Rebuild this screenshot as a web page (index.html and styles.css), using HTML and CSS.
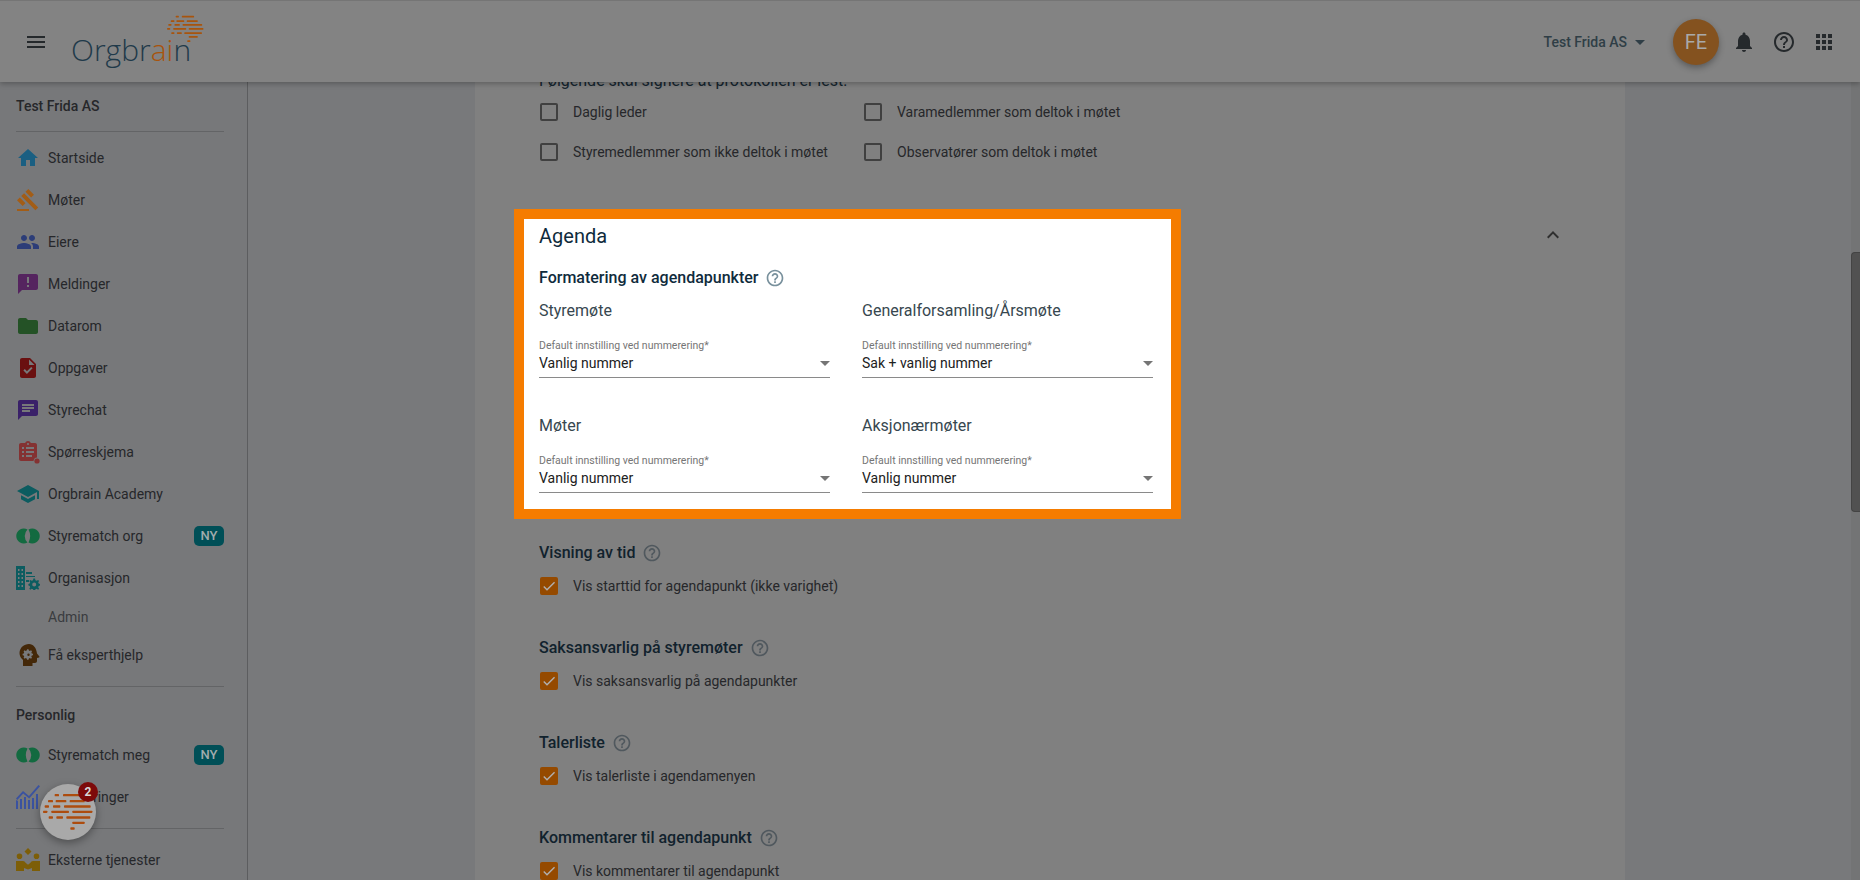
FILE: index.html
```html
<!DOCTYPE html>
<html lang="en">
<head>
  <title>Orgbrain</title>
  <meta charset="UTF-8">
  <meta name="viewport" content="width=device-width, initial-scale=1">
  <link rel="stylesheet" href="styles.css">
</head>
<body>

  <svg class="sprite" xmlns="http://www.w3.org/2000/svg">
    <symbol id="i-menu" viewBox="0 0 24 24"><path d="M3 18h18v-2H3v2zm0-5h18v-2H3v2zm0-7v2h18V6H3z"/></symbol>
    <symbol id="i-home" viewBox="0 0 24 24"><path d="M10 20v-6h4v6h5v-8h3L12 3 2 12h3v8z"/></symbol>
    <symbol id="i-gavel" viewBox="0 0 24 24"><path d="M1 21h12v2H1zM5.245 8.07l2.83-2.83 14.14 14.14-2.83 2.83zM12.317 1l5.657 5.657-2.83 2.83-5.656-5.657zM3.825 9.485l5.657 5.657-2.828 2.828-5.657-5.657z"/></symbol>
    <symbol id="i-people" viewBox="0 0 24 24"><path d="M16 11c1.66 0 2.99-1.34 2.99-3S17.66 5 16 5c-1.66 0-3 1.34-3 3s1.34 3 3 3zm-8 0c1.66 0 2.99-1.34 2.99-3S9.66 5 8 5C6.34 5 5 6.34 5 8s1.34 3 3 3zm0 2c-2.33 0-7 1.17-7 3.5V19h14v-2.5c0-2.33-4.67-3.5-7-3.5zm8 0c-.29 0-.62.02-.97.05 1.16.84 1.97 1.97 1.97 3.45V19h6v-2.5c0-2.33-4.67-3.5-7-3.5z"/></symbol>
    <symbol id="i-sms" viewBox="0 0 24 24"><path d="M20 2H4c-1.1 0-1.99.9-1.99 2L2 22l4-4h14c1.1 0 2-.9 2-2V4c0-1.1-.9-2-2-2zm-7 9h-2V5h2v6zm0 4h-2v-2h2v2z"/></symbol>
    <symbol id="i-folder" viewBox="0 0 24 24"><path d="M10 4H4c-1.1 0-1.99.9-1.99 2L2 18c0 1.1.9 2 2 2h16c1.1 0 2-.9 2-2V8c0-1.1-.9-2-2-2h-8l-2-2z"/></symbol>
    <symbol id="i-task" viewBox="0 0 24 24"><path d="M14 2H6c-1.1 0-1.99.9-1.99 2L4 20c0 1.1.89 2 1.99 2H18c1.1 0 2-.9 2-2V8l-6-6zm-3.06 16L7.4 14.46l1.41-1.41 2.12 2.12 4.24-4.24 1.41 1.41L10.94 18zM13 9V3.5L18.5 9H13z"/></symbol>
    <symbol id="i-chat" viewBox="0 0 24 24"><path d="M20 2H4c-1.1 0-1.99.9-1.99 2L2 22l4-4h14c1.1 0 2-.9 2-2V4c0-1.1-.9-2-2-2zM6 9h12v2H6V9zm8 5H6v-2h8v2zm4-6H6V6h12v2z"/></symbol>
    <symbol id="i-survey" viewBox="0 0 24 24"><path d="M19 3h-4.18C14.4 1.84 13.3 1 12 1c-1.3 0-2.4.84-2.82 2H5c-1.1 0-2 .9-2 2v14c0 1.1.9 2 2 2h12.5a4 4 0 0 1 3.5-3.6V5c0-1.1-.9-2-2-2zm-7 0c.55 0 1 .45 1 1s-.45 1-1 1-1-.45-1-1 .45-1 1-1zM6 7h2v2H6V7zm0 4h2v2H6v-2zm0 4h2v2H6v-2zm4-8h8v2h-8V7zm0 4h8v2h-8v-2zm0 4h6v2h-6v-2z"/><circle cx="21" cy="21" r="2.6"/></symbol>
    <symbol id="i-school" viewBox="0 0 24 24"><path d="M5 13.18v4L12 21l7-3.82v-4L12 17l-7-3.82zM12 3L1 9l11 6 9-4.91V17h2V9L12 3z"/></symbol>
    <symbol id="i-match-org" viewBox="0 0 24 24"><path d="M11.500 5.500A7.500 7.500 0 1 0 11.500 18.500 9 9 0 0 1 11.500 5.500z"/><path d="M12.500 5.500A7.500 7.500 0 1 1 12.500 18.500 14 14 0 0 0 12.500 5.500z"/></symbol>
    <symbol id="i-match-meg" viewBox="0 0 24 24"><path d="M11.500 5.500A7.500 7.500 0 1 0 11.500 18.500 14 14 0 0 1 11.500 5.500z"/><path d="M12.500 5.500A7.500 7.500 0 1 1 12.500 18.500 9 9 0 0 0 12.500 5.500z"/></symbol>
    <symbol id="i-org" viewBox="0 0 24 24"><path d="M0 0h9v24H0zM10 6h6v2h-6zM10 10h9v1h-9zM10 14h3v2h-3z"/><path fill="#78797b" d="M2 3h1.500v2H2zM5.500 3H7v2H5.500zM2 7h1.500v2H2zM5.500 7H7v2H5.500zM2 11h1.500v2H2zM5.500 11H7v2H5.500zM2 15h1.500v2H2zM5.500 15H7v2H5.500zM2 19h1.500v2H2zM5.500 19H7v2H5.500z"/><path d="M18 12.500l1 .1.400 1.600 1.300.6 1.400-.9 1 1-.9 1.400.5 1.300 1.300.4v1.600l-1.300.4-.5 1.300.9 1.400-1 1-1.400-.9-1.300.5-.4 1.200h-1.600l-.4-1.200-1.300-.5-1.400.9-1-1 .9-1.400-.5-1.300-1.300-.4V18l1.300-.4.5-1.300-.9-1.400 1-1 1.400.9 1.300-.6.400-1.600zm.200 4a2 2 0 1 0 0 4 2 2 0 0 0 0-4z"/></symbol>
    <symbol id="i-expert" viewBox="0 0 24 24"><path d="M13 1C8 1 3.500 4.800 3.500 10c0 3 1.400 5.200 3.500 6.900V23h9.500v-3h2.500c1.100 0 2-.9 2-2v-3l2-.6c.4-.1.600-.6.400-1L21 10.500C20.500 5 17.300 1 13 1zm-.5 5.300l.4 1.200 1 .4 1.100-.6 1 1-.6 1.100.4 1 1.200.4v1.400l-1.200.4-.4 1-.1.1.700 1-1 1-1.100-.6-1 .4-.4 1.200h-1.400l-.4-1.200-1-.4-1.100.6-1-1 .6-1.100-.4-1-1.200-.4V10.800l1.200-.4.4-1-.6-1.100 1-1 1.100.6 1-.4.400-1.200zm.0 4.200a1.200 1.200 0 1 0 0 2.400 1.200 1.200 0 0 0 0-2.400z"/></symbol>
    <symbol id="i-stats" viewBox="0 0 24 24"><path d="M0 15l2 1v8H0zM4 14h2v10H4zM8 12h2v12H8zM12 15h2v9h-2zM16 13h2v11h-2zM20 9h2v15h-2z"/><path d="M0 13.500L7 6l6 5L22.500 0 24 1.300 13.200 13.500l-6-5L1.300 15z"/></symbol>
    <symbol id="i-ext" viewBox="0 0 24 24"><path d="M12 0l3.500 3.500L12 7 8.500 3.500zM3.500 5.500a2.800 2.800 0 1 1 0 5.600 2.800 2.800 0 0 1 0-5.600zM20.500 5.500a2.800 2.800 0 1 1 0 5.600 2.800 2.800 0 0 1 0-5.600zM0 13h7c1.200 0 2 .8 2.500 1.700l2.500 2 2.500-2c.5-.9 1.300-1.700 2.500-1.700h7v10h-8v-3l-4 1.500L8 20v3H0z"/></symbol>
    <symbol id="i-bell" viewBox="0 0 24 24"><path d="M12 22c1.100 0 2-.9 2-2h-4c0 1.100.89 2 2 2zm6-6v-5c0-3.070-1.640-5.640-4.500-6.320V4c0-.83-.67-1.500-1.500-1.500s-1.500.67-1.500 1.500v.68C7.630 5.360 6 7.920 6 11v5l-2 2v1h16v-1l-2-2z"/></symbol>
    <symbol id="i-help" viewBox="0 0 24 24"><path d="M11 18h2v-2h-2v2zm1-16C6.480 2 2 6.480 2 12s4.480 10 10 10 10-4.480 10-10S17.520 2 12 2zm0 18c-4.410 0-8-3.590-8-8s3.590-8 8-8 8 3.590 8 8-3.590 8-8 8zm0-14c-2.210 0-4 1.790-4 4h2c0-1.100.9-2 2-2s2 .9 2 2c0 2-3 1.750-3 5h2c0-2.250 3-2.500 3-5 0-2.210-1.790-4-4-4z"/></symbol>
    <symbol id="i-apps" viewBox="0 0 24 24"><path d="M4 8h4V4H4v4zm6 12h4v-4h-4v4zm-6 0h4v-4H4v4zm0-6h4v-4H4v4zm6 0h4v-4h-4v4zm6-10v4h4V4h-4zm-6 4h4V4h-4v4zm6 6h4v-4h-4v4zm0 6h4v-4h-4v4z"/></symbol>
    <symbol id="i-up" viewBox="0 0 24 24"><path d="M12 8l-6 6 1.410 1.410L12 10.830l4.590 4.580L18 14z"/></symbol>
    <symbol id="i-drop" viewBox="0 0 24 24"><path d="M7 10l5 5 5-5z"/></symbol>
    <symbol id="i-check" viewBox="0 0 24 24"><path d="M9 16.170L4.830 12l-1.420 1.410L9 19 21 7l-1.410-1.410z"/></symbol>
    <symbol id="i-brain" viewBox="130 578 150 114">
      <rect x="165" y="581" width="13" height="7" rx="2"/><rect x="190" y="581" width="50" height="7" rx="2"/>
      <rect x="145" y="599" width="15" height="7" rx="2"/><rect x="168" y="599" width="32" height="7" rx="2"/><rect x="210" y="599" width="45" height="7" rx="2"/>
      <rect x="135" y="615" width="13" height="7" rx="2"/><rect x="160" y="615" width="22" height="7" rx="2"/><rect x="193" y="615" width="80" height="7" rx="2"/>
      <rect x="130" y="631" width="13" height="7" rx="2"/><rect x="155" y="631" width="53" height="7" rx="2"/><rect x="218" y="631" width="60" height="7" rx="2"/>
      <rect x="147" y="648" width="13" height="7" rx="2"/><rect x="170" y="648" width="20" height="7" rx="2"/><rect x="200" y="648" width="72" height="7" rx="2"/>
      <rect x="218" y="664" width="37" height="7" rx="2"/>
      <rect x="212" y="681" width="13" height="7" rx="2"/>
    </symbol>
  </svg>

  <header class="topbar">
    <svg class="icon menu-btn"><use href="#i-menu"/></svg>
    <div class="logo">
      <span class="logo-text">Orgbr<span class="logo-accent">ai</span>n</span>
      <svg class="logo-brain"><use href="#i-brain"/></svg>
    </div>
    <div class="topbar-right">
      <span class="org-switch">Test Frida AS</span>
      <svg class="icon org-arrow"><use href="#i-drop"/></svg>
      <div class="avatar">FE</div>
      <svg class="icon"><use href="#i-bell"/></svg>
      <svg class="icon"><use href="#i-help"/></svg>
      <svg class="icon"><use href="#i-apps"/></svg>
    </div>
  </header>

  <div class="layout">
    <nav class="sidebar">
      <div class="side-title first">Test Frida AS</div>
      <hr class="side-line">
      <ul class="side-list">
        <li><svg class="icon c-home"><use href="#i-home"/></svg>Startside</li>
        <li><svg class="icon c-gavel"><use href="#i-gavel"/></svg>Møter</li>
        <li><svg class="icon c-people"><use href="#i-people"/></svg>Eiere</li>
        <li><svg class="icon c-sms"><use href="#i-sms"/></svg>Meldinger</li>
        <li><svg class="icon c-folder"><use href="#i-folder"/></svg>Datarom</li>
        <li><svg class="icon c-task"><use href="#i-task"/></svg>Oppgaver</li>
        <li><svg class="icon c-chat"><use href="#i-chat"/></svg>Styrechat</li>
        <li><svg class="icon c-survey"><use href="#i-survey"/></svg>Spørreskjema</li>
        <li><svg class="icon c-school"><use href="#i-school"/></svg>Orgbrain Academy</li>
        <li><svg class="icon c-match"><use href="#i-match-org"/></svg>Styrematch org<span class="tag">NY</span></li>
        <li><svg class="icon c-school"><use href="#i-org"/></svg>Organisasjon</li>
        <li class="sub">Admin</li>
        <li><svg class="icon c-expert"><use href="#i-expert"/></svg>Få eksperthjelp</li>
      </ul>
      <hr class="side-line gap-a">
      <div class="side-title personal">Personlig</div>
      <ul class="side-list">
        <li><svg class="icon c-match"><use href="#i-match-meg"/></svg>Styrematch meg<span class="tag">NY</span></li>
        <li><svg class="icon c-stats"><use href="#i-stats"/></svg>Investeringer</li>
      </ul>
      <hr class="side-line gap-b">
      <ul class="side-list">
        <li class="last"><svg class="icon c-ext"><use href="#i-ext"/></svg>Eksterne tjenester</li>
      </ul>
    </nav>

    <main class="main">
      <div class="panel">
        <p class="intro">Følgende skal signere at protokollen er lest:</p>
        <div class="check-grid">
          <label class="check"><span class="box"></span>Daglig leder</label>
          <label class="check"><span class="box"></span>Varamedlemmer som deltok i møtet</label>
          <label class="check"><span class="box"></span>Styremedlemmer som ikke deltok i møtet</label>
          <label class="check"><span class="box"></span>Observatører som deltok i møtet</label>
        </div>

        <div class="agenda-row">
          <section class="agenda">
            <h2>Agenda</h2>
            <h3>Formatering av agendapunkter <svg class="help"><use href="#i-help"/></svg></h3>
            <div class="field-grid">
              <div>
                <h4>Styremøte</h4>
                <div class="field-label">Default innstilling ved nummerering*</div>
                <div class="select">Vanlig nummer<svg class="icon"><use href="#i-drop"/></svg></div>
              </div>
              <div>
                <h4>Generalforsamling/Årsmøte</h4>
                <div class="field-label">Default innstilling ved nummerering*</div>
                <div class="select">Sak + vanlig nummer<svg class="icon"><use href="#i-drop"/></svg></div>
              </div>
              <div>
                <h4>Møter</h4>
                <div class="field-label">Default innstilling ved nummerering*</div>
                <div class="select">Vanlig nummer<svg class="icon"><use href="#i-drop"/></svg></div>
              </div>
              <div>
                <h4>Aksjonærmøter</h4>
                <div class="field-label">Default innstilling ved nummerering*</div>
                <div class="select">Vanlig nummer<svg class="icon"><use href="#i-drop"/></svg></div>
              </div>
            </div>
          </section>
          <svg class="icon collapse"><use href="#i-up"/></svg>
        </div>

        <section class="option first">
          <h3>Visning av tid <svg class="help"><use href="#i-help"/></svg></h3>
          <label class="check"><span class="box on"><svg><use href="#i-check"/></svg></span>Vis starttid for agendapunkt (ikke varighet)</label>
        </section>
        <section class="option">
          <h3>Saksansvarlig på styremøter <svg class="help"><use href="#i-help"/></svg></h3>
          <label class="check"><span class="box on"><svg><use href="#i-check"/></svg></span>Vis saksansvarlig på agendapunkter</label>
        </section>
        <section class="option">
          <h3>Talerliste <svg class="help"><use href="#i-help"/></svg></h3>
          <label class="check"><span class="box on"><svg><use href="#i-check"/></svg></span>Vis talerliste i agendamenyen</label>
        </section>
        <section class="option">
          <h3>Kommentarer til agendapunkt <svg class="help"><use href="#i-help"/></svg></h3>
          <label class="check"><span class="box on"><svg><use href="#i-check"/></svg></span>Vis kommentarer til agendapunkt</label>
        </section>
      </div>
      <div class="scrollbar"><div class="thumb"></div></div>
    </main>
  </div>

  <div class="fab">
    <svg class="fab-brain"><use href="#i-brain"/></svg>
    <span class="fab-badge">2</span>
  </div>

</body>
</html>
```

FILE: styles.css
```css
* {
  box-sizing: border-box;
}

html, body {
  height: 100%;
}

body {
  margin: 0;
  font-family: Roboto, "Liberation Sans", sans-serif;
  font-size: 14px;
  color: #26272a;
  background-color: #78797b;
  display: flex;
  flex-direction: column;
  overflow: hidden;
}

.sprite {
  display: none;
}

.icon {
  width: 24px;
  height: 24px;
  flex: none;
  fill: #25292c;
}

/* top bar */
.topbar {
  height: 82px;
  flex: none;
  display: flex;
  align-items: center;
  padding: 0 24px;
  background-color: #838383;
  box-shadow: 0 2px 5px rgba(0, 0, 0, 0.25);
  border-top: 1px solid #757575;
  position: relative;
  z-index: 2;
}

.logo {
  margin-left: 24px;
  position: relative;
  height: 46px;
  width: 140px;
}

.logo-text {
  position: absolute;
  left: -1px;
  bottom: -3px;
  font-family: "Open Sans", sans-serif;
  font-weight: 300;
  font-size: 30px;
  color: #1f3a4a;
  line-height: 36px;
}

.logo-accent {
  color: #a8540d;
}

.logo-brain {
  position: absolute;
  left: 95px;
  top: -4px;
  width: 37px;
  height: 28px;
  fill: #a8540d;
}

.topbar-right {
  margin-left: auto;
  display: flex;
  align-items: center;
  gap: 16px;
}

.org-switch {
  font-weight: 500;
  color: #2f3e46;
}

.org-arrow {
  margin-left: -15px;
  margin-right: -1px;
  fill: #2f3e46;
}

.avatar {
  width: 46px;
  height: 46px;
  border-radius: 50%;
  margin: 0 -3px 0 6px;
  background-color: #84521f;
  color: #a9a9a9;
  font-size: 20px;
  display: flex;
  align-items: center;
  justify-content: center;
  box-shadow: 0 3px 6px rgba(0, 0, 0, 0.3);
}

/* sidebar */
.layout {
  flex: 1;
  display: flex;
  min-height: 0;
}

.sidebar {
  width: 248px;
  flex: none;
  padding: 0 23px 0 16px;
  background-color: #77787a;
  border-right: 1px solid #5c5d5f;
  overflow: hidden;
}

.side-title {
  font-weight: 500;
  height: 30px;
  line-height: 30px;
  margin-top: 13px;
}

.side-title.first {
  margin-top: 9px;
}

.side-title.personal {
  margin-bottom: 4px;
}

.side-line {
  margin: 0;
  border: 0;
  border-top: 1px solid #636466;
}

.side-title.first + .side-line {
  margin-top: 10px;
  margin-bottom: 5px;
}

.side-line.gap-a {
  margin-top: 10px;
}

.side-line.gap-b {
  margin-top: 10px;
  margin-bottom: 10px;
}

.side-list {
  list-style: none;
  margin: 0;
  padding: 0;
}

.side-list li {
  height: 42px;
  display: flex;
  align-items: center;
  gap: 8px;
}

.side-list li.sub {
  height: 35px;
  padding-left: 32px;
  color: #3a3c3f;
}

.tag {
  margin-left: auto;
  width: 30px;
  height: 20px;
  border-radius: 5px;
  background-color: #004f57;
  color: #a0abad;
  font-weight: 500;
  font-size: 13px;
  line-height: 20px;
  text-align: center;
}

.c-home { fill: #1a5f82; }
.c-gavel { fill: #a35d16; }
.c-people { fill: #2c3d78; }
.c-sms { fill: #55245f; }
.c-folder { fill: #245226; }
.c-task { fill: #6a1010; }
.c-chat { fill: #3a2169; }
.c-survey { fill: #843232; }
.c-school { fill: #0c5c60; }
.c-match { fill: #136a40; }
.c-stats { fill: #3a52a0; }
.c-expert { fill: #442809; }
.c-ext { fill: #7d5e08; }

/* main */
.main {
  flex: 1;
  display: flex;
  min-width: 0;
  overflow: hidden;
}

.panel {
  width: 1150px;
  flex: none;
  margin-left: 227px;
  margin-top: -11px;
  padding-left: 64px;
  background-color: #808080;
}

.scrollbar {
  margin-left: auto;
  width: 9px;
  background-color: #737475;
  margin-top: -82px;
  padding-top: 252px;
}

.thumb {
  height: 260px;
  background-color: #515151;
  border-radius: 4px 0 0 4px;
  border: 1px solid #444;
  border-right: 0;
}

.intro {
  margin: 0;
  height: 20px;
  font-size: 16px;
  line-height: 20px;
  color: #14242e;
}

.check-grid {
  margin-top: 11px;
  display: grid;
  grid-template-columns: 324px 1fr;
  row-gap: 20px;
}

.check {
  display: flex;
  align-items: center;
  height: 20px;
  padding-left: 1px;
  gap: 15px;
}

.box {
  width: 18px;
  height: 18px;
  flex: none;
  border: 2px solid #404040;
  border-radius: 2px;
}

.box.on {
  background-color: #954a00;
  border-color: #954a00;
  display: flex;
  align-items: center;
  justify-content: center;
}

.box.on svg {
  width: 16px;
  height: 16px;
  flex: none;
  fill: #b0b0b0;
}

/* highlighted agenda block */
.agenda-row {
  display: flex;
  align-items: flex-start;
  margin-left: -25px;
  margin-top: 47px;
}

.agenda {
  width: 667px;
  height: 310px;
  flex: none;
  padding: 3px 15px 0;
  border: 10px solid #f57c00;
  background-color: #fff;
  color: #0f2b3c;
}

.agenda h2 {
  margin: 0;
  font-size: 20px;
  font-weight: 400;
  line-height: 28px;
}

h3 {
  margin: 0;
  font-size: 16px;
  font-weight: 500;
  line-height: 24px;
  display: flex;
  align-items: center;
  gap: 7px;
  color: #11222d;
}

.agenda h3 {
  margin-top: 16px;
  color: #0f2b3c;
}

.help {
  width: 20px;
  height: 20px;
  flex: none;
  fill: #50585e;
}

.agenda .help {
  fill: #78909c;
}

.field-grid {
  margin-top: 9px;
  display: grid;
  grid-template-columns: 291px 291px;
  column-gap: 32px;
  row-gap: 36px;
}

h4 {
  margin: 0;
  font-size: 16px;
  font-weight: 400;
  line-height: 24px;
  color: #37474f;
}

.field-label {
  margin-top: 16px;
  font-size: 10.5px;
  line-height: 14px;
  color: #757575;
}

.select {
  height: 25px;
  line-height: 21px;
  font-size: 14px;
  color: #212121;
  border-bottom: 1px solid #8a8a8a;
  display: flex;
  justify-content: space-between;
}

.select .icon {
  fill: #757575;
  margin: -2px -6.5px 0 0;
}

.collapse {
  margin: 14px 0 0 360px;
  fill: #2f2f2f;
}

.option {
  height: 95px;
}

.option.first {
  margin-top: 22px;
}

.option .check {
  margin-top: 11px;
}

/* floating help button */
.fab {
  position: absolute;
  left: 40px;
  top: 784px;
  width: 56px;
  height: 56px;
  border-radius: 50%;
  background-color: #a9a9a9;
  box-shadow: 0 3px 8px rgba(0, 0, 0, 0.35);
  display: flex;
  align-items: center;
  justify-content: center;
  z-index: 3;
}

.fab-brain {
  width: 50px;
  height: 38px;
  fill: #ad4c0e;
}

.fab-badge {
  position: absolute;
  right: -2px;
  top: -2px;
  width: 20px;
  height: 20px;
  border-radius: 50%;
  background-color: #7d0a0a;
  color: #d8d8d8;
  font-weight: 700;
  font-size: 12px;
  line-height: 20px;
  text-align: center;
}
```
